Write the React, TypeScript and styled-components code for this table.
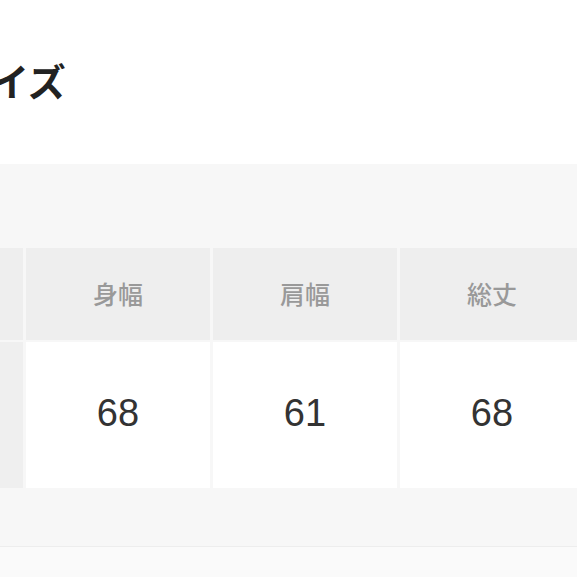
import React from 'react';
import styled, {createGlobalStyle} from "styled-components";

const GlobalStyle = createGlobalStyle`
  html, body {
    margin: 0;
    padding: 0;
    background: #FFF;
    overflow: hidden;
  }
`;

type SizeColumn = {
    label: string;
    value: string;
};

const columns: SizeColumn[] = [
    {label: '身幅', value: '68'},
    {label: '肩幅', value: '61'},
    {label: '総丈', value: '68'},
];

const App = () => {
    return (
        <StyledPage>
            <GlobalStyle/>
            <TitleBar>
                <Title>サイズ</Title>
            </TitleBar>
            <SizeSection>
                <SizeTable>
                    <LabelCell $head/>
                    {columns.map(c => <HeadCell key={c.label}>{c.label}</HeadCell>)}
                    <LabelCell/>
                    {columns.map(c => <ValueCell key={c.label}>{c.value}</ValueCell>)}
                </SizeTable>
            </SizeSection>
            <BottomArea/>
        </StyledPage>
    );
};

export default App;

const StyledPage = styled.div`
  width: 577px;
  height: 577px;
  overflow: hidden;
  display: flex;
  flex-direction: column;
  background: #FFF;
`;
const TitleBar = styled.div`
  height: 164px;
  flex-shrink: 0;
  display: flex;
  align-items: flex-start;
  padding-top: 56px;
  box-sizing: border-box;
`;
const Title = styled.h1`
  margin: 0 0 0 -47px;
  color: #222;
  font-family: "Noto Sans CJK JP", "Noto Sans", sans-serif;
  font-size: 38px;
  font-weight: 700;
  line-height: 48px;
  white-space: nowrap;
`;
const SizeSection = styled.div`
  height: 383px;
  flex-shrink: 0;
  box-sizing: border-box;
  background: #F7F7F7;
  border-bottom: 1px solid #EDEDED;
  padding-top: 84px;
`;
const SizeTable = styled.div`
  display: grid;
  grid-template-columns: 23px 184px 184px 184px;
  grid-template-rows: 92px 146px;
  column-gap: 3px;
  row-gap: 2px;
  width: 600px;
`;
const LabelCell = styled.div<{ $head?: boolean }>`
  background: ${({$head}) => $head ? '#EEEEEE' : '#EFEFEF'};
`;
const HeadCell = styled.div`
  background: #EEEEEE;
  display: flex;
  align-items: center;
  justify-content: center;
  padding-bottom: 3px;
  box-sizing: border-box;
  color: #999;
  font-family: "Noto Sans CJK JP", "Noto Sans", sans-serif;
  font-size: 25px;
  font-weight: 500;
`;
const ValueCell = styled.div`
  background: #FFF;
  display: flex;
  align-items: center;
  justify-content: center;
  padding-bottom: 4px;
  box-sizing: border-box;
  color: #333;
  font-family: "Liberation Sans", Arial, sans-serif;
  font-size: 38px;
  font-weight: 400;
`;
const BottomArea = styled.div`
  flex: 1;
  background: #FAFAFA;
`;
